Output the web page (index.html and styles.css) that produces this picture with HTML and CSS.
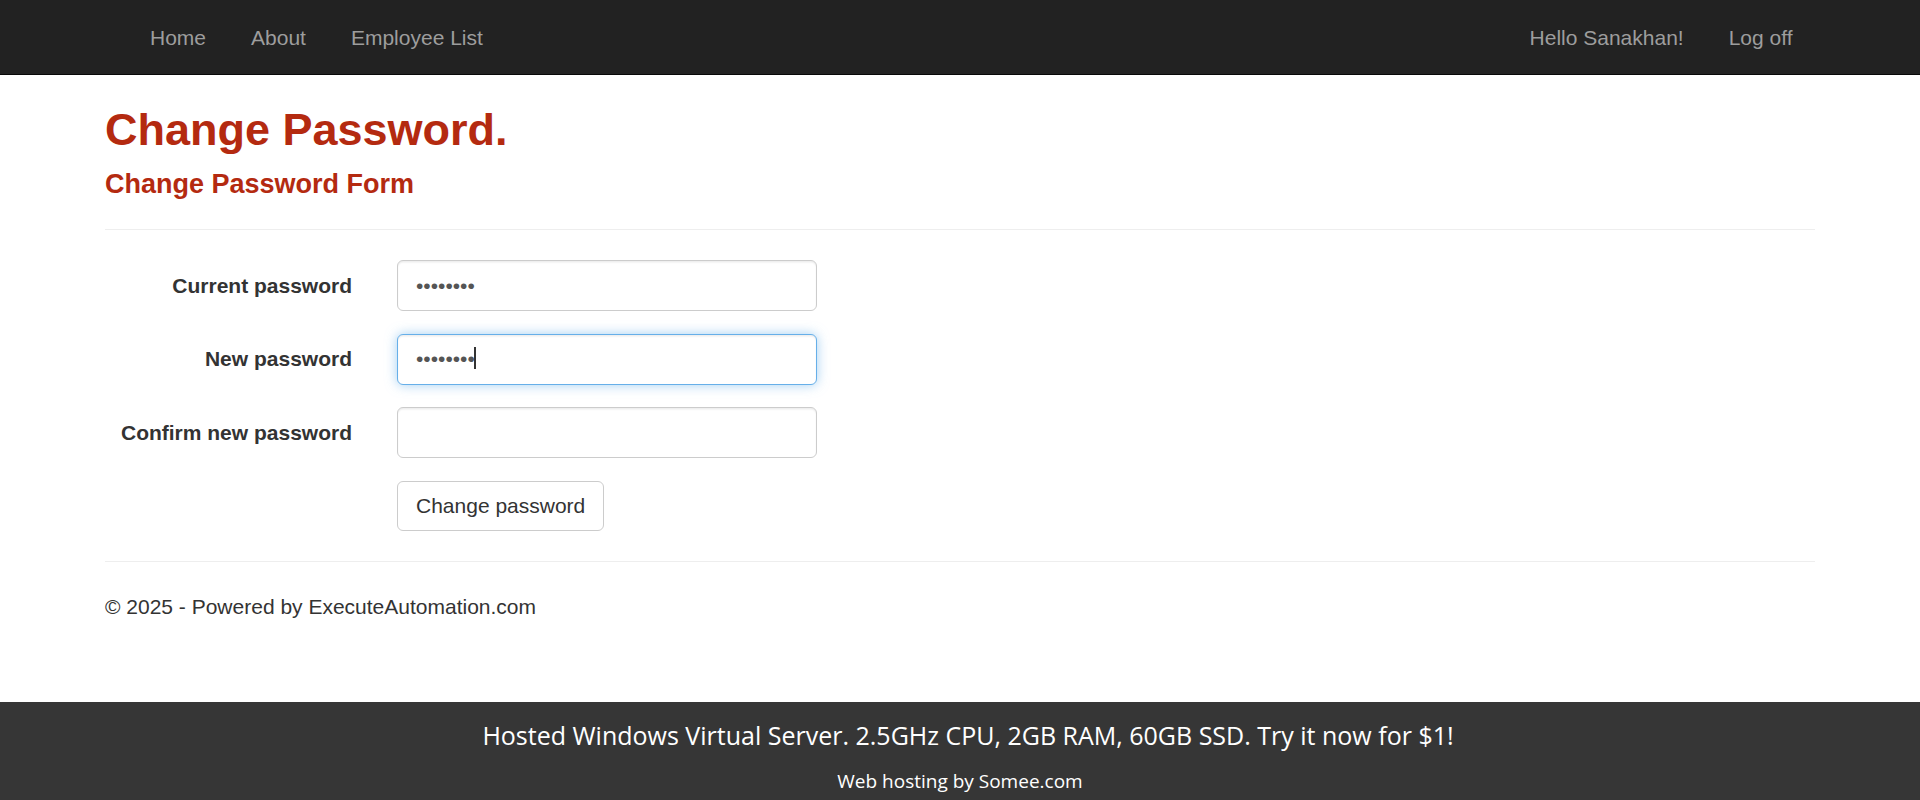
FILE: index.html
```html
<!DOCTYPE html>
<html lang="en">
<head>
<meta charset="utf-8">
<title>Change Password - ExecuteAutomation</title>
<link rel="stylesheet" href="styles.css">
</head>
<body>
<header class="navbar">
  <div class="container nav-inner">
    <ul class="nav">
      <li><a href="#">Home</a></li>
      <li><a href="#">About</a></li>
      <li><a href="#">Employee List</a></li>
    </ul>
    <ul class="nav nav-right">
      <li><a href="#">Hello Sanakhan!</a></li>
      <li><a href="#">Log off</a></li>
    </ul>
  </div>
</header>

<main class="container body-content">
  <h2 class="page-title">Change Password.</h2>
  <h4 class="sub-title">Change Password Form</h4>
  <hr class="rule">
  <form class="form-horizontal">
    <div class="form-group">
      <label class="control-label" for="cur">Current password</label>
      <div class="control">
        <input class="form-control" id="cur" type="password" value="12345678">
      </div>
    </div>
    <div class="form-group">
      <label class="control-label" for="new">New password</label>
      <div class="control">
        <input class="form-control is-focused" id="new" type="password" value="12345678">
        <span class="caret"></span>
      </div>
    </div>
    <div class="form-group">
      <label class="control-label" for="conf">Confirm new password</label>
      <div class="control">
        <input class="form-control" id="conf" type="password" value="">
      </div>
    </div>
    <div class="form-group">
      <div class="control offset">
        <button class="btn" type="button">Change password</button>
      </div>
    </div>
  </form>
  <hr class="rule">
  <footer class="site-footer">
    <p>© 2025 - Powered by ExecuteAutomation.com</p>
  </footer>
</main>

<div class="somee">
  <div class="somee-ad">Hosted Windows Virtual Server. 2.5GHz CPU, 2GB RAM, 60GB SSD. Try it now for $1!</div>
  <div class="somee-by">Web hosting by Somee.com</div>
</div>
</body>
</html>
```
FILE: styles.css
```css
* { box-sizing: border-box; }

html, body {
  margin: 0;
  padding: 0;
}

body {
  font-family: "Liberation Sans", Arial, Helvetica, sans-serif;
  font-size: 21px;
  line-height: 30px;
  color: #333;
  background: #fff;
}

.container {
  width: 1755px;
  margin: 0 auto;
  padding: 0 22.5px;
}

/* navbar */
.navbar {
  height: 75px;
  background: #222;
  border-bottom: 1px solid #080808;
}

.nav-inner {
  display: flex;
  justify-content: space-between;
  padding-left: 45px;
}

.nav {
  display: flex;
  list-style: none;
  margin: 0;
  padding: 0;
}

.nav a {
  display: block;
  padding: 22.5px 22.5px;
  line-height: 30px;
  color: #9d9d9d;
  text-decoration: none;
}

/* headings */
.page-title {
  margin: 30px 0 15px;
  font-size: 45px;
  line-height: 49.5px;
  font-weight: bold;
  color: #b42a10;
}

.sub-title {
  margin: 15px 0 15px;
  font-size: 27px;
  line-height: 29.7px;
  font-weight: bold;
  color: #b42a10;
}

.rule {
  margin: 30px 0;
  border: 0;
  border-top: 1px solid #eee;
  height: 0;
}

/* form */
.form-horizontal {
  margin: 0;
}

.form-group {
  display: flex;
  gap: 45px;
  margin-bottom: 22.5px;
}

.control-label {
  width: 247px;
  flex: none;
  text-align: right;
  font-weight: bold;
  padding-top: 10.5px;
  line-height: 30px;
}

.control {
  position: relative;
}

.control.offset {
  margin-left: 292px;
}

.form-control {
  display: block;
  width: 420px;
  height: 51px;
  padding: 9px 18px;
  font-family: "Liberation Sans", Arial, Helvetica, sans-serif;
  font-size: 21px;
  line-height: 30px;
  color: #555;
  background: #fff;
  border: 1px solid #ccc;
  border-radius: 6px;
  box-shadow: inset 0 1.5px 1.5px rgba(0, 0, 0, .075);
  outline: none;
}

.form-control.is-focused {
  border-color: #66afe9;
  box-shadow: inset 0 1.5px 1.5px rgba(0, 0, 0, .075), 0 0 12px rgba(102, 175, 233, .6);
}

.caret {
  position: absolute;
  left: 77px;
  top: 13px;
  width: 2px;
  height: 22px;
  background: #333;
}

.btn {
  display: inline-block;
  padding: 9px 18px;
  font-family: "Liberation Sans", Arial, Helvetica, sans-serif;
  font-size: 21px;
  line-height: 30px;
  color: #333;
  background: #fff;
  border: 1px solid #ccc;
  border-radius: 6px;
  cursor: pointer;
}

/* footer */
.body-content {
  padding-bottom: 30px;
}

.site-footer p {
  margin: 0 0 15px;
}

/* somee banner */
.somee {
  margin-top: 35.5px;
  background: #363636;
  color: #fff;
  text-align: center;
  font-family: "Open Sans", "Noto Sans", sans-serif;
  padding: 18px 0 30px;
}

.somee-ad {
  font-size: 25px;
  line-height: 30px;
  padding-left: 16px;
}

.somee-by {
  margin-top: 19px;
  font-size: 19px;
  line-height: 24px;
}
```
